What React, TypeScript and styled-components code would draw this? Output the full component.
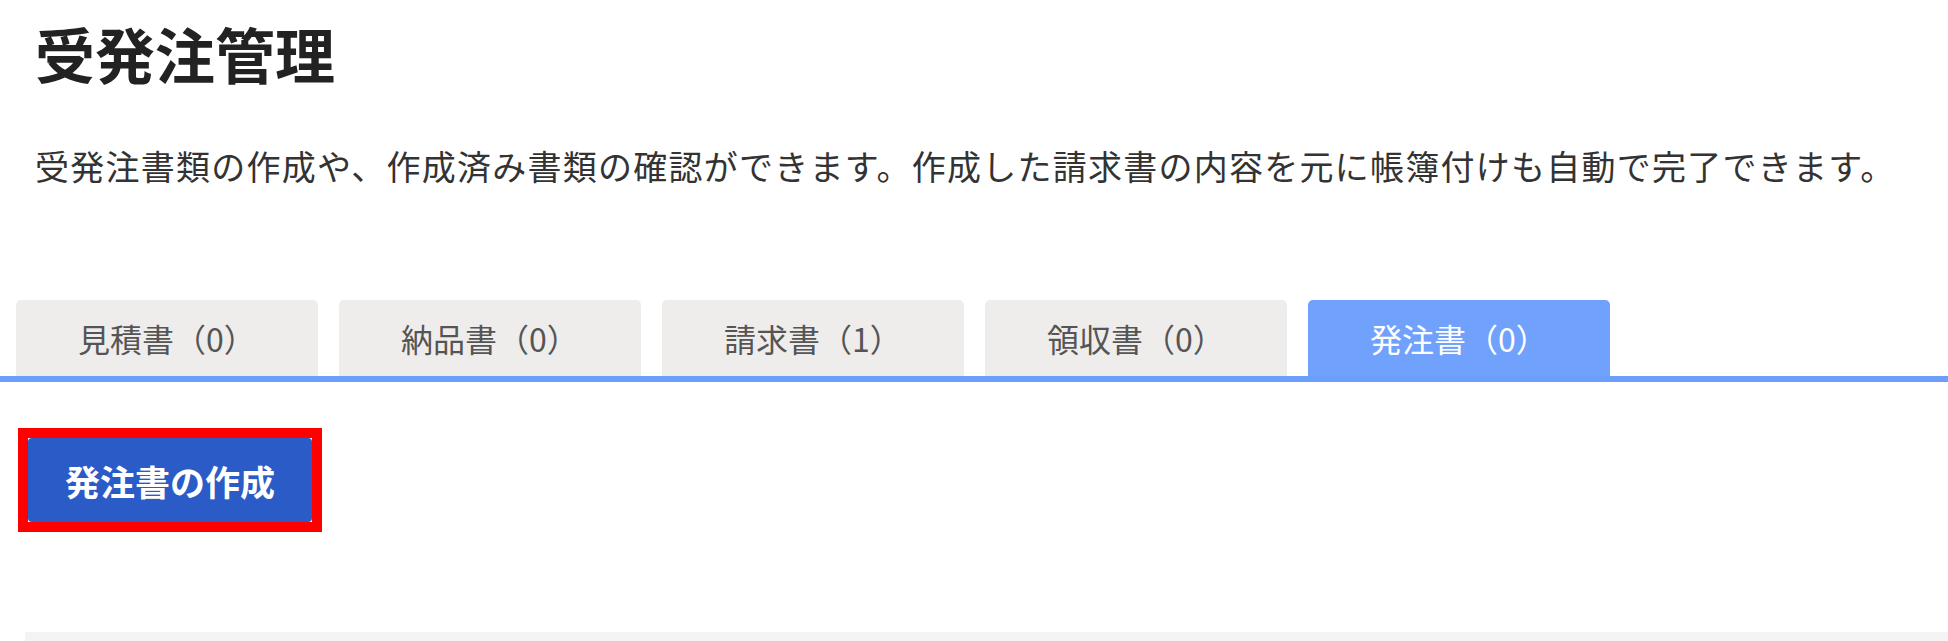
import * as React from 'react'
import styled, { createGlobalStyle } from 'styled-components'

const GlobalStyle = createGlobalStyle`
  html, body {
    margin: 0;
    padding: 0;
    background: #ffffff;
  }
  body {
    font-family: "Noto Sans CJK JP", "Noto Sans", sans-serif;
    color: #222;
  }
`

const Page = styled.div`
  width: 1948px;
  height: 641px;
  overflow: hidden;
  display: flex;
  flex-direction: column;
`

const Header = styled.header`
  padding: 23px 0 0 35px;
`

const Title = styled.h1`
  margin: 0;
  font-size: 60px;
  line-height: 60px;
  font-weight: 700;
  color: #222;
`

const Lead = styled.p`
  margin: 66px 0 0;
  font-size: 34px;
  line-height: 34px;
  font-weight: 400;
  color: #333;
  letter-spacing: 1.25px;
`

const TabBar = styled.nav`
  margin-top: 117px;
  display: flex;
  gap: 21px;
  padding-left: 16px;
  border-bottom: 6px solid #6c9ffb;
`

const Tab = styled.button<{ $active?: boolean }>`
  width: 302px;
  height: 76px;
  border: none;
  border-radius: 5px 5px 0 0;
  background: ${(p) => (p.$active ? '#70a1fc' : '#efedec')};
  color: ${(p) => (p.$active ? '#ffffff' : '#555555')};
  font-family: inherit;
  font-size: 32px;
  font-weight: 400;
  padding: 0;
  cursor: pointer;
`

const Actions = styled.div`
  padding: 46px 0 0 18px;
`

const Highlight = styled.div`
  display: inline-block;
  border: 10px solid #ff0000;
  line-height: 0;
`

const CreateButton = styled.button`
  width: 284px;
  height: 84px;
  border: none;
  border-radius: 4px;
  background: #2b5bc7;
  color: #ffffff;
  font-family: inherit;
  font-size: 35px;
  font-weight: 700;
  padding: 0;
  cursor: pointer;
`

const ListArea = styled.div`
  margin: 100px 0 0 25px;
  flex: 1;
  background: #f5f3f4;
`

const tabs = [
  { label: '見積書（0）' },
  { label: '納品書（0）' },
  { label: '請求書（1）' },
  { label: '領収書（0）' },
  { label: '発注書（0）', active: true },
]

export default function App() {
  return (
    <Page>
      <GlobalStyle />
      <Header>
        <Title>受発注管理</Title>
        <Lead>
          受発注書類の作成や、作成済み書類の確認ができます。作成した請求書の内容を元に帳簿付けも自動で完了できます。
        </Lead>
      </Header>
      <TabBar>
        {tabs.map((t) => (
          <Tab key={t.label} $active={t.active}>
            {t.label}
          </Tab>
        ))}
      </TabBar>
      <Actions>
        <Highlight>
          <CreateButton>発注書の作成</CreateButton>
        </Highlight>
      </Actions>
      <ListArea />
    </Page>
  )
}
